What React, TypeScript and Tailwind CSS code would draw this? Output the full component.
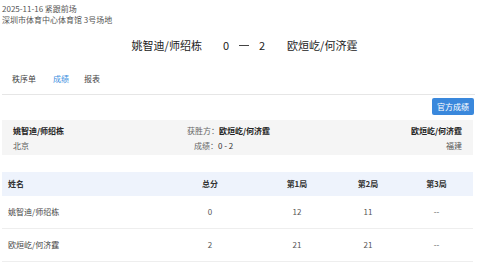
import React from 'react';

const FONT = "font-['Noto_Sans_CJK_SC','Noto_Sans',sans-serif]";

const rows = [
  { name: '姚智迪/师绍栋', total: '0', g1: '12', g2: '11', g3: '--' },
  { name: '欧烜屹/何济霆', total: '2', g1: '21', g2: '21', g3: '--' },
];

const cols = 'grid grid-cols-[160px_96px_78px_64px_1fr] items-center';

export default function App() {
  return (
    <div className={`${FONT} w-[477px] h-[270px] overflow-hidden bg-white text-[#333] px-[2px]`}>
      {/* meta */}
      <div className="pt-[3px] text-[8px] leading-[11px] text-[#555]">
        <div>2025-11-16 紧跟前场</div>
        <div>深圳市体育中心体育馆 3号场地</div>
      </div>

      {/* match title */}
      <div className="mt-[12px] flex items-center justify-center text-[11px] leading-[16px] text-[#222]">
        <span className="ml-[12px]">姚智迪/师绍栋</span>
        <span className="ml-[21px]">0</span>
        <span className="mx-[10px] w-[10px] h-px bg-[#444]" />
        <span>2</span>
        <span className="ml-[22px]">欧烜屹/何济霆</span>
      </div>

      {/* tabs */}
      <div className="mt-[20px] flex gap-[17px] px-[10px] pb-[9px] border-b border-[#e6e6e6] text-[8px] leading-[12px]">
        <span className="text-[#444]">秩序单</span>
        <span className="text-[#3b8ee0]">成绩</span>
        <span className="text-[#444] ml-[-2px]">报表</span>
      </div>

      {/* official button */}
      <div className="mt-[3px] flex justify-end pr-[1px]">
        <button className="h-[17px] px-[5px] rounded-[2px] bg-[#3a88dc] text-white text-[8px] leading-[17px]">
          官方成绩
        </button>
      </div>

      {/* summary box */}
      <div className="mt-[5px] mr-[2px] h-[35px] bg-[#f5f5f5] grid grid-cols-[170px_1fr_170px] items-center px-[11px] text-[8px] leading-[15px]">
        <div>
          <div className="font-bold text-[#222]">姚智迪/师绍栋</div>
          <div className="text-[#555]">北京</div>
        </div>
        <div className="flex flex-col items-start pl-[4px]">
          <div>
            <span className="text-[#666]">获胜方：</span>
            <span className="font-bold text-[#222]">欧烜屹/何济霆</span>
          </div>
          <div className="pl-[7px]">
            <span className="text-[#666]">成绩：</span>
            <span className="text-[#333]">0 - 2</span>
          </div>
        </div>
        <div className="text-right">
          <div className="font-bold text-[#222]">欧烜屹/何济霆</div>
          <div className="text-[#555]">福建</div>
        </div>
      </div>

      {/* result table */}
      <div className="mt-[17px] mr-[2px] text-[8px]">
        <div className={`${cols} h-[24px] bg-[#eef3fc] font-bold text-[#333]`}>
          <div className="pl-[6px]">姓名</div>
          <div className="text-center">总分</div>
          <div className="text-center">第1局</div>
          <div className="text-center">第2局</div>
          <div className="text-center">第3局</div>
        </div>
        {rows.map((r) => (
          <div key={r.name} className={`${cols} h-[33px] border-b border-[#eeeeee] text-[#555]`}>
            <div className="pl-[6px] text-[#444]">{r.name}</div>
            <div className="text-center">{r.total}</div>
            <div className="text-center">{r.g1}</div>
            <div className="text-center">{r.g2}</div>
            <div className="text-center">{r.g3}</div>
          </div>
        ))}
      </div>
    </div>
  );
}
